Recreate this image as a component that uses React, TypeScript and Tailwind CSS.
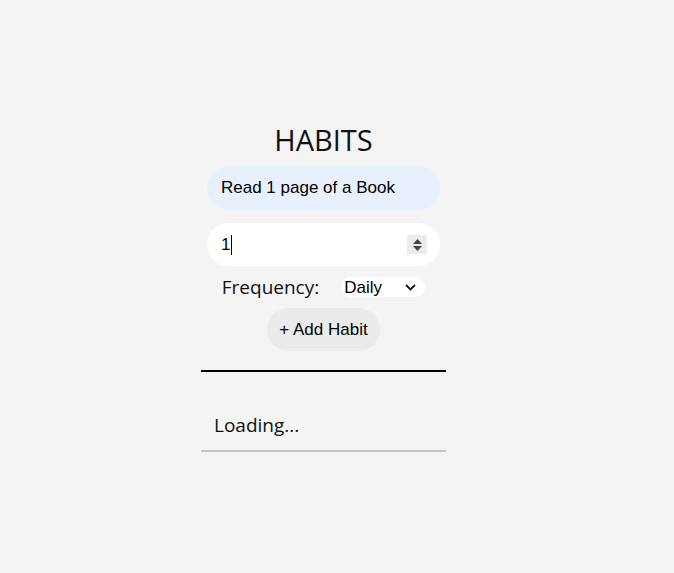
const ARIAL = "font-['Liberation_Sans',Arial,sans-serif]"
const UI = "font-['Open_Sans','Noto_Sans',sans-serif]"

export default function App() {
  return (
    <div className="min-h-[573px] w-full bg-[#f4f4f4] pl-[201px] pt-[118px]">
      <div className="flex w-[245px] flex-col items-center">
        <h1 className={`${UI} text-[29px] leading-[44px] text-[#111]`}>HABITS</h1>

        <div
          className={`${ARIAL} mt-[4px] flex h-[44px] w-[233px] items-center rounded-full bg-[#e8f0fe] pl-[14px] text-[17px] text-black`}
        >
          Read 1 page of a Book
        </div>

        <div
          className={`${ARIAL} mt-[13px] flex h-[43px] w-[233px] items-center rounded-full bg-white pl-[14px] pr-[13px] text-[17px] text-black`}
        >
          <span>1</span>
          <span className="ml-[1px] h-[20px] w-[1px] bg-black" />
          <span className="ml-auto flex h-[19px] w-[20px] flex-col items-center justify-center gap-[2px] bg-[#ececec]">
            <svg width="9" height="5" viewBox="0 0 9 5">
              <path d="M0 5 L4.5 0 L9 5 Z" fill="#444" />
            </svg>
            <svg width="9" height="5" viewBox="0 0 9 5">
              <path d="M0 0 L4.5 5 L9 0 Z" fill="#444" />
            </svg>
          </span>
        </div>

        <div className="mt-[10px] flex items-center gap-[22px]">
          <span className={`${UI} text-[19px] leading-[22px] text-[#111]`}>Frequency:</span>
          <span
            className={`${ARIAL} flex h-[20px] w-[84px] items-center rounded-full bg-white pl-[3px] pr-[9px] text-[17px] leading-none text-black`}
          >
            Daily
            <svg className="ml-auto" width="11" height="7" viewBox="0 0 11 7">
              <path d="M1 1 L5.5 5.5 L10 1" fill="none" stroke="#111" strokeWidth="1.8" />
            </svg>
          </span>
        </div>

        <button
          className={`${ARIAL} mt-[10px] h-[43px] w-[113px] rounded-full bg-[#ebebeb] text-[17px] text-black`}
        >
          + Add Habit
        </button>

        <div className="mt-[19px] h-[2px] w-full bg-black" />

        <div className={`${UI} mt-[39px] w-full pl-[13px] text-[19px] leading-[28px] text-[#111]`}>
          Loading...
        </div>

        <div className="mt-[11px] h-[2px] w-full bg-[#c4c4c4]" />
      </div>
    </div>
  )
}
